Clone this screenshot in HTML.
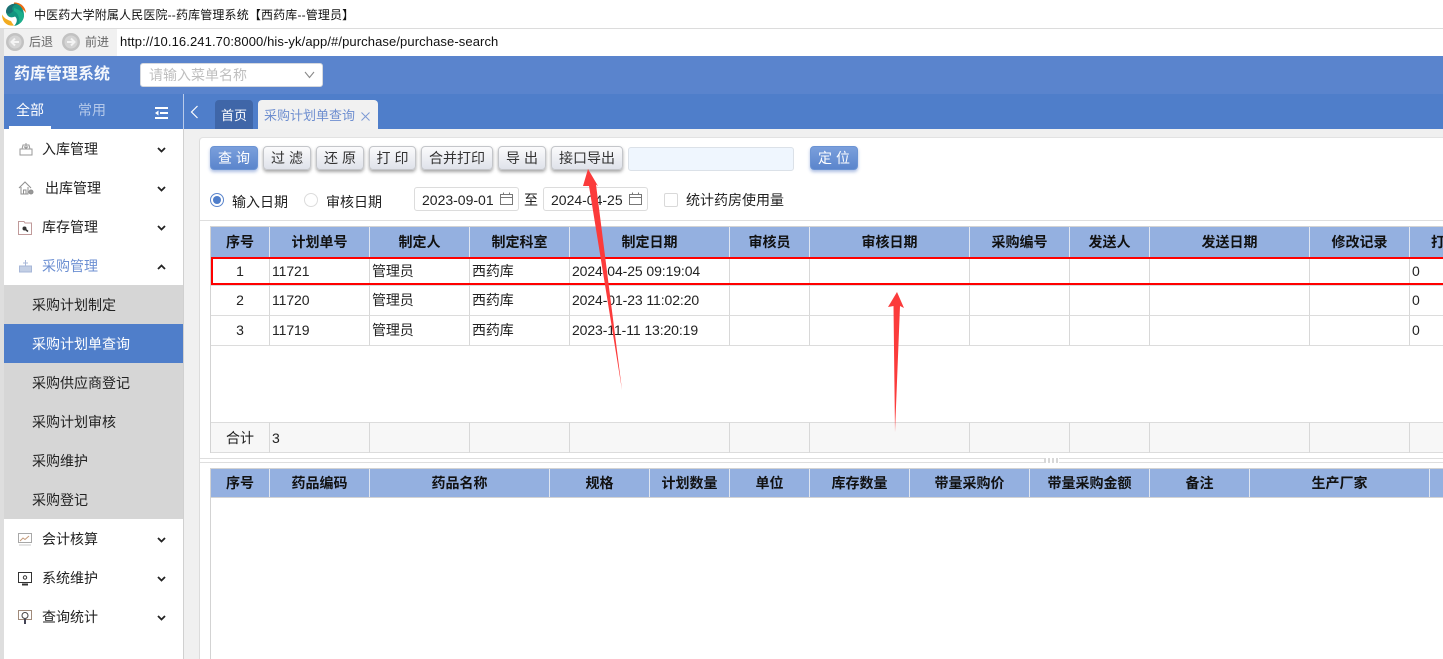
<!DOCTYPE html>
<html lang="zh"><head><meta charset="utf-8"><title>药库管理系统</title>
<style>
html,body{margin:0;padding:0;width:1443px;height:659px;overflow:hidden;background:#fff}
body{position:relative;font-family:"Liberation Sans","Noto Sans CJK SC",sans-serif;font-size:14px;color:#222}
.a{position:absolute;white-space:nowrap}
.t{position:absolute;white-space:nowrap;line-height:20px}
.btn{position:absolute;top:146px;height:24px;box-sizing:border-box;border:1px solid #c4c6ca;border-radius:4px;background:linear-gradient(#fbfbfc,#dfe2ea);box-shadow:0 2px 3px rgba(0,0,0,.35);text-align:center;line-height:22px;font-size:14px;color:#333}
.btn.p{background:linear-gradient(#7a9fdc,#5b85cc);border-color:#6b93d3;color:#fff;box-shadow:0 2px 3px rgba(70,110,190,.45)}
.w{letter-spacing:4px;text-indent:4px}
.mi{position:absolute;left:42px;font-size:14px;line-height:20px;color:#222;white-space:nowrap}
.si{position:absolute;left:4px;width:179px;height:39px;background:#d6d6d6;line-height:41px;padding-left:28px;box-sizing:border-box;font-size:14px;color:#222}
.hc,.c,.f{position:absolute;box-sizing:border-box;border-right:1px solid #d8d8d8;text-align:center;overflow:hidden;white-space:nowrap}
.hc{background:#94b0e0;font-weight:bold;color:#111;font-size:14px;line-height:30px;border-right:1px solid #dfe6f2}
.c{border-bottom:1px solid #dcdcdc;line-height:29px;font-size:14px;letter-spacing:-.1px;text-align:left;padding-left:2px;color:#222}
.f{background:#f7f7f7;line-height:30px;font-size:14px;text-align:left;padding-left:2px;border-top:1px solid #dcdcdc;border-bottom:1px solid #dcdcdc}
svg{position:absolute;overflow:visible}
</style></head><body>

<!-- title bar -->
<svg style="left:2px;top:2px" width="24" height="24" viewBox="0 0 24 24">
<path d="M12 0.500C18 0 23.500 4.500 24 11C21 7 17 4 12 3.500Z" fill="#ee6a12"/>
<path d="M0 12.500C2 16 5 18 9 19C10 21 11 22 12 23.500C5 24.500 0 20 0 12.500Z" fill="#f2ab1f"/>
<path d="M4 10C4 4 10 1 15 2C19 3.500 22 8 22 13C22 18 18 23 12 24C15 21 16 17 13 14.500C9 16.500 5 15 4 10Z" fill="#12947f"/>
<path d="M4 10C4 4 10 1 15 2C11 3 9 6 11 9C9 12 5 13 4 10Z" fill="#1a6f72"/>
<path d="M12 6C16 7 21 10 22 13C22 17 20 20 17 22C18 16 16 11 12 9Z" fill="#1bae8a"/>
</svg>
<div class="t" style="left:34px;top:5px;font-size:12px;color:#111;letter-spacing:.15px">中医药大学附属人民医院--药库管理系统【西药库--管理员】</div>
<div class="a" style="left:0;top:28px;width:1443px;height:1px;background:#dcdcdc"></div>

<!-- address bar -->
<div class="a" style="left:0;top:29px;width:117px;height:27px;background:#f1f1f1"></div>
<div class="a" style="left:0;top:29px;width:4px;height:630px;background:#dedede"></div>
<svg style="left:6px;top:33px" width="18" height="18" viewBox="0 0 18 18"><circle cx="9" cy="9" r="9" fill="#c2c2c2"/><circle cx="9" cy="9" r="6.5" fill="#d4d4d4"/><path d="M13 9H6M9 5.500L5.500 9L9 12.500" stroke="#f4f4f4" stroke-width="2" fill="none"/></svg>
<div class="t" style="left:29px;top:32px;font-size:12px;color:#666">后退</div>
<svg style="left:62px;top:33px" width="18" height="18" viewBox="0 0 18 18"><circle cx="9" cy="9" r="9" fill="#c2c2c2"/><circle cx="9" cy="9" r="6.5" fill="#d4d4d4"/><path d="M5 9H12M9 5.500L12.500 9L9 12.500" stroke="#f4f4f4" stroke-width="2" fill="none"/></svg>
<div class="t" style="left:85px;top:32px;font-size:12px;color:#666">前进</div>
<div class="t" style="left:120px;top:32px;font-size:13px;color:#111;letter-spacing:.1px">http://10.16.241.70:8000/his-yk/app/#/purchase/purchase-search</div>

<!-- header -->
<div class="a" style="left:4px;top:56px;width:1439px;height:38px;background:#5a84cd"></div>
<div class="t" style="left:14px;top:65px;font-size:16px;font-weight:bold;color:#f4f7fc">药库管理系统</div>
<div class="a" style="left:140px;top:63px;width:183px;height:24px;box-sizing:border-box;background:#fff;border:1px solid #d5d8de;border-radius:3px"></div>
<div class="t" style="left:149px;top:65px;font-size:14px;color:#bfbfbf">请输入菜单名称</div>
<svg style="left:304px;top:71px" width="11" height="8" viewBox="0 0 11 8"><path d="M1 1L5.500 6.500L10 1" stroke="#8a8a8a" stroke-width="1.100" fill="none"/></svg>

<!-- nav bar -->
<div class="a" style="left:4px;top:94px;width:1439px;height:35px;background:#4f7eca"></div>
<div class="a" style="left:183px;top:94px;width:1px;height:565px;background:#d0d0d0"></div>
<div class="a" style="left:183px;top:94px;width:1px;height:35px;background:#b9cbea"></div>
<div class="t" style="left:16px;top:100px;font-size:14px;color:#fff">全部</div>
<div class="a" style="left:9px;top:126px;width:42px;height:3px;background:#fff"></div>
<div class="t" style="left:78px;top:100px;font-size:14px;color:#b5c9ea">常用</div>
<svg style="left:155px;top:107px" width="13" height="12" viewBox="0 0 13 12"><path d="M0 1H13M5 6H13M0 11H13" stroke="#fff" stroke-width="2"/><path d="M3.500 3.500L0 6L3.500 8.500Z" fill="#fff"/></svg>
<svg style="left:190px;top:105px" width="9" height="14" viewBox="0 0 9 14"><path d="M7.500 1L1.500 7L7.500 13" stroke="#fff" stroke-width="1.200" fill="none"/></svg>
<div class="a" style="left:215px;top:100px;width:38px;height:31px;background:#3f66a8;border-radius:4px 4px 0 0"></div>
<div class="t" style="left:221px;top:106px;font-size:13px;color:#fff">首页</div>
<div class="a" style="left:258px;top:100px;width:120px;height:31px;background:#f1f1f1;border-radius:4px 4px 0 0"></div>
<div class="t" style="left:264px;top:106px;font-size:13px;color:#6f8fd0">采购计划单查询</div>
<svg style="left:361px;top:112px" width="9" height="9" viewBox="0 0 9 9"><path d="M0.500 0.500L8.500 8.500M8.500 0.500L0.500 8.500" stroke="#7c99d4" stroke-width="1"/></svg>

<!-- main bg -->
<div class="a" style="left:184px;top:129px;width:1259px;height:530px;background:#f0f0f0"></div>
<div class="a" style="left:199px;top:137px;width:1244px;height:522px;background:#fff;border-left:1px solid #dcdcdc;border-top:1px solid #e2e2e2;box-sizing:border-box;border-radius:4px 0 0 0"></div>

<!-- sidebar -->
<div class="a" style="left:4px;top:129px;width:179px;height:530px;background:#fff"></div>
<div class="si" style="top:285px">采购计划制定</div>
<div class="si" style="top:324px;background:#4f7eca;color:#fff">采购计划单查询</div>
<div class="si" style="top:363px">采购供应商登记</div>
<div class="si" style="top:402px">采购计划审核</div>
<div class="si" style="top:441px">采购维护</div>
<div class="si" style="top:480px">采购登记</div>

<div class="mi" style="top:139px">入库管理</div>
<div class="mi" style="top:178px;left:45px">出库管理</div>
<div class="mi" style="top:217px">库存管理</div>
<div class="mi" style="top:256px;color:#6c8fd2">采购管理</div>
<div class="mi" style="top:529px">会计核算</div>
<div class="mi" style="top:568px">系统维护</div>
<div class="mi" style="top:607px">查询统计</div>

<!-- sidebar icons -->
<svg style="left:19px;top:142px" width="14" height="14" viewBox="0 0 14 14" fill="none" stroke="#9a9a9a"><path d="M1 7H13V13H1ZM3 7L4 3H10L11 7M7 1V6M5 4.500L7 6.500L9 4.500"/></svg>
<svg style="left:18px;top:181px" width="16" height="14" viewBox="0 0 16 14" fill="none" stroke="#8f8f8f"><path d="M1 7L7 1L13 7M3 6V13H10V6M5.500 13V9H8V13"/><circle cx="13" cy="11" r="2" fill="#999"/></svg>
<svg style="left:18px;top:221px" width="14" height="14" viewBox="0 0 14 14" fill="none" stroke="#c09a9a"><path d="M0.500 0.500H6L7 2H13.500V13.500H0.500Z"/><circle cx="6.500" cy="7.500" r="2" fill="#333" stroke="none"/><path d="M7 8L10 10.500" stroke="#333" stroke-width="1.500"/></svg>
<svg style="left:19px;top:259px" width="13" height="14" viewBox="0 0 13 14" fill="none" stroke="#a7b7d8"><path d="M0.500 7H12.500V13H0.500Z" fill="#c3cfe5"/><path d="M6.500 1V7M4 4H9"/></svg>
<svg style="left:18px;top:533px" width="14" height="13" viewBox="0 0 14 13" fill="none" stroke="#a8a8a8"><rect x="0.500" y="0.500" width="13" height="9"/><path d="M2 8L5 5L7 6.500L11 3" stroke="#c49a7a"/><path d="M1 12H13" stroke="#c8c8c8"/></svg>
<svg style="left:18px;top:572px" width="14" height="14" viewBox="0 0 14 14" fill="none" stroke="#333"><rect x="0.500" y="0.500" width="13" height="10"/><circle cx="7" cy="5.500" r="1.700"/><path d="M4 12.500H10" stroke-width="2"/></svg>
<svg style="left:18px;top:610px" width="14" height="15" viewBox="0 0 14 15" fill="none" stroke="#666"><rect x="0.500" y="0.500" width="13" height="9" stroke="#a08a7a"/><circle cx="7" cy="5.500" r="3" stroke="#444"/><path d="M7 9V14" stroke="#445" stroke-width="2"/></svg>

<!-- chevrons -->
<svg style="left:157px;top:147px" width="9" height="6" viewBox="0 0 9 6"><path d="M1 1L4.500 4.500L8 1" stroke="#222" stroke-width="1.800" fill="none"/></svg>
<svg style="left:157px;top:186px" width="9" height="6" viewBox="0 0 9 6"><path d="M1 1L4.500 4.500L8 1" stroke="#222" stroke-width="1.800" fill="none"/></svg>
<svg style="left:157px;top:225px" width="9" height="6" viewBox="0 0 9 6"><path d="M1 1L4.500 4.500L8 1" stroke="#222" stroke-width="1.800" fill="none"/></svg>
<svg style="left:157px;top:264px" width="9" height="6" viewBox="0 0 9 6"><path d="M1 5L4.500 1.500L8 5" stroke="#222" stroke-width="1.800" fill="none"/></svg>
<svg style="left:157px;top:537px" width="9" height="6" viewBox="0 0 9 6"><path d="M1 1L4.500 4.500L8 1" stroke="#222" stroke-width="1.800" fill="none"/></svg>
<svg style="left:157px;top:576px" width="9" height="6" viewBox="0 0 9 6"><path d="M1 1L4.500 4.500L8 1" stroke="#222" stroke-width="1.800" fill="none"/></svg>
<svg style="left:157px;top:615px" width="9" height="6" viewBox="0 0 9 6"><path d="M1 1L4.500 4.500L8 1" stroke="#222" stroke-width="1.800" fill="none"/></svg>

<!-- toolbar -->
<div class="btn p w" style="left:210px;width:48px">查询</div>
<div class="btn w" style="left:263px;width:48px">过滤</div>
<div class="btn w" style="left:316px;width:48px">还原</div>
<div class="btn w" style="left:369px;width:47px">打印</div>
<div class="btn" style="left:421px;width:72px">合并打印</div>
<div class="btn w" style="left:498px;width:48px">导出</div>
<div class="btn" style="left:551px;width:72px">接口导出</div>
<div class="a" style="left:628px;top:147px;width:166px;height:24px;box-sizing:border-box;background:#eff6fe;border:1px solid #dbe1e8;border-radius:3px"></div>
<div class="btn p w" style="left:810px;width:48px">定位</div>

<!-- filter row -->
<svg style="left:210px;top:193px" width="14" height="14" viewBox="0 0 14 14"><circle cx="7" cy="7" r="6.500" fill="#fff" stroke="#5b85cc"/><circle cx="7" cy="7" r="4" fill="#4f7eca"/></svg>
<div class="t" style="left:232px;top:192px">输入日期</div>
<svg style="left:304px;top:193px" width="14" height="14" viewBox="0 0 14 14"><circle cx="7" cy="7" r="6.500" fill="#fff" stroke="#dcdcdc"/></svg>
<div class="t" style="left:326px;top:192px">审核日期</div>
<div class="a" style="left:414px;top:187px;width:105px;height:24px;box-sizing:border-box;border:1px solid #dcdcdc;border-radius:3px;background:#fff"></div>
<div class="t" style="left:422px;top:190px">2023-09-01</div>
<svg style="left:500px;top:192px" width="13" height="13" viewBox="0 0 13 13" fill="none" stroke="#777"><path d="M0.500 2.500H12.500V12.500H0.500ZM0.500 5.500H12.500M3.500 0.500V3M9.500 0.500V3"/></svg>
<div class="t" style="left:524px;top:190px">至</div>
<div class="a" style="left:543px;top:187px;width:105px;height:24px;box-sizing:border-box;border:1px solid #dcdcdc;border-radius:3px;background:#fff"></div>
<div class="t" style="left:551px;top:190px">2024-04-25</div>
<svg style="left:629px;top:192px" width="13" height="13" viewBox="0 0 13 13" fill="none" stroke="#777"><path d="M0.500 2.500H12.500V12.500H0.500ZM0.500 5.500H12.500M3.500 0.500V3M9.500 0.500V3"/></svg>
<div class="a" style="left:664px;top:193px;width:14px;height:14px;box-sizing:border-box;border:1px solid #d9d9d9;border-radius:2px"></div>
<div class="t" style="left:686px;top:190px">统计药房使用量</div>
<div class="a" style="left:200px;top:220px;width:1243px;height:1px;background:#dedede"></div>

<!-- table 1 -->
<div class="a" style="left:210px;top:226px;width:1233px;height:227px;box-sizing:border-box;border-left:1px solid #d3d3d3;border-top:1px solid #d3d3d3"></div>
<div class="hc" style="left:211px;top:227px;width:59px;height:30px">序号</div>
<div class="hc" style="left:270px;top:227px;width:100px;height:30px">计划单号</div>
<div class="hc" style="left:370px;top:227px;width:100px;height:30px">制定人</div>
<div class="hc" style="left:470px;top:227px;width:100px;height:30px">制定科室</div>
<div class="hc" style="left:570px;top:227px;width:160px;height:30px">制定日期</div>
<div class="hc" style="left:730px;top:227px;width:80px;height:30px">审核员</div>
<div class="hc" style="left:810px;top:227px;width:160px;height:30px">审核日期</div>
<div class="hc" style="left:970px;top:227px;width:100px;height:30px">采购编号</div>
<div class="hc" style="left:1070px;top:227px;width:80px;height:30px">发送人</div>
<div class="hc" style="left:1150px;top:227px;width:160px;height:30px">发送日期</div>
<div class="hc" style="left:1310px;top:227px;width:100px;height:30px">修改记录</div>
<div class="hc" style="left:1410px;top:227px;width:33px;height:30px;border-right:0;text-align:left;padding-left:21px">打印</div>

<!-- row 1 -->
<div class="c" style="left:211px;top:257px;width:59px;height:29px;text-align:center;padding:0">1</div>
<div class="c" style="left:270px;top:257px;width:100px;height:29px">11721</div>
<div class="c" style="left:370px;top:257px;width:100px;height:29px">管理员</div>
<div class="c" style="left:470px;top:257px;width:100px;height:29px">西药库</div>
<div class="c" style="left:570px;top:257px;width:160px;height:29px">2024-04-25 09:19:04</div>
<div class="c" style="left:730px;top:257px;width:80px;height:29px"></div>
<div class="c" style="left:810px;top:257px;width:160px;height:29px"></div>
<div class="c" style="left:970px;top:257px;width:100px;height:29px"></div>
<div class="c" style="left:1070px;top:257px;width:80px;height:29px"></div>
<div class="c" style="left:1150px;top:257px;width:160px;height:29px"></div>
<div class="c" style="left:1310px;top:257px;width:100px;height:29px"></div>
<div class="c" style="left:1410px;top:257px;width:33px;height:29px;border-right:0">0</div>
<!-- row 2 -->
<div class="c" style="left:211px;top:286px;width:59px;height:30px;text-align:center;padding:0">2</div>
<div class="c" style="left:270px;top:286px;width:100px;height:30px">11720</div>
<div class="c" style="left:370px;top:286px;width:100px;height:30px">管理员</div>
<div class="c" style="left:470px;top:286px;width:100px;height:30px">西药库</div>
<div class="c" style="left:570px;top:286px;width:160px;height:30px">2024-01-23 11:02:20</div>
<div class="c" style="left:730px;top:286px;width:80px;height:30px"></div>
<div class="c" style="left:810px;top:286px;width:160px;height:30px"></div>
<div class="c" style="left:970px;top:286px;width:100px;height:30px"></div>
<div class="c" style="left:1070px;top:286px;width:80px;height:30px"></div>
<div class="c" style="left:1150px;top:286px;width:160px;height:30px"></div>
<div class="c" style="left:1310px;top:286px;width:100px;height:30px"></div>
<div class="c" style="left:1410px;top:286px;width:33px;height:30px;border-right:0">0</div>
<!-- row 3 -->
<div class="c" style="left:211px;top:316px;width:59px;height:30px;text-align:center;padding:0">3</div>
<div class="c" style="left:270px;top:316px;width:100px;height:30px">11719</div>
<div class="c" style="left:370px;top:316px;width:100px;height:30px">管理员</div>
<div class="c" style="left:470px;top:316px;width:100px;height:30px">西药库</div>
<div class="c" style="left:570px;top:316px;width:160px;height:30px">2023-11-11 13:20:19</div>
<div class="c" style="left:730px;top:316px;width:80px;height:30px"></div>
<div class="c" style="left:810px;top:316px;width:160px;height:30px"></div>
<div class="c" style="left:970px;top:316px;width:100px;height:30px"></div>
<div class="c" style="left:1070px;top:316px;width:80px;height:30px"></div>
<div class="c" style="left:1150px;top:316px;width:160px;height:30px"></div>
<div class="c" style="left:1310px;top:316px;width:100px;height:30px"></div>
<div class="c" style="left:1410px;top:316px;width:33px;height:30px;border-right:0">0</div>
<!-- footer -->
<div class="f" style="left:211px;top:422px;width:59px;height:31px;text-align:center;padding:0">合计</div>
<div class="f" style="left:270px;top:422px;width:100px;height:31px">3</div>
<div class="f" style="left:370px;top:422px;width:100px;height:31px"></div>
<div class="f" style="left:470px;top:422px;width:100px;height:31px"></div>
<div class="f" style="left:570px;top:422px;width:160px;height:31px"></div>
<div class="f" style="left:730px;top:422px;width:80px;height:31px"></div>
<div class="f" style="left:810px;top:422px;width:160px;height:31px"></div>
<div class="f" style="left:970px;top:422px;width:100px;height:31px"></div>
<div class="f" style="left:1070px;top:422px;width:80px;height:31px"></div>
<div class="f" style="left:1150px;top:422px;width:160px;height:31px"></div>
<div class="f" style="left:1310px;top:422px;width:100px;height:31px"></div>
<div class="f" style="left:1410px;top:422px;width:33px;height:31px;border-right:0"></div>

<!-- red highlight -->
<div class="a" style="left:211px;top:257px;width:1232px;height:28px;box-sizing:border-box;border:2px solid #f00;border-right:0"></div>

<!-- splitter -->
<div class="a" style="left:200px;top:458px;width:1243px;height:5px;box-sizing:border-box;border-top:1px solid #dedede;border-bottom:1px solid #dedede;background:#fff"></div>
<div class="a" style="left:1044px;top:458px;width:15px;height:5px;background:repeating-linear-gradient(90deg,#d8d8d8 0 2px,#fff 2px 4px)"></div>

<!-- table 2 -->
<div class="a" style="left:210px;top:468px;width:1px;height:191px;background:#d3d3d3"></div>
<div class="a" style="left:210px;top:468px;width:1233px;height:1px;background:#d3d3d3"></div>
<div class="hc" style="left:211px;top:469px;width:59px;height:28px;line-height:28px">序号</div>
<div class="hc" style="left:270px;top:469px;width:100px;height:28px;line-height:28px">药品编码</div>
<div class="hc" style="left:370px;top:469px;width:180px;height:28px;line-height:28px">药品名称</div>
<div class="hc" style="left:550px;top:469px;width:100px;height:28px;line-height:28px">规格</div>
<div class="hc" style="left:650px;top:469px;width:80px;height:28px;line-height:28px">计划数量</div>
<div class="hc" style="left:730px;top:469px;width:80px;height:28px;line-height:28px">单位</div>
<div class="hc" style="left:810px;top:469px;width:100px;height:28px;line-height:28px">库存数量</div>
<div class="hc" style="left:910px;top:469px;width:120px;height:28px;line-height:28px">带量采购价</div>
<div class="hc" style="left:1030px;top:469px;width:120px;height:28px;line-height:28px">带量采购金额</div>
<div class="hc" style="left:1150px;top:469px;width:100px;height:28px;line-height:28px">备注</div>
<div class="hc" style="left:1250px;top:469px;width:180px;height:28px;line-height:28px">生产厂家</div>
<div class="hc" style="left:1430px;top:469px;width:13px;height:28px;border-right:0"></div>
<div class="a" style="left:211px;top:497px;width:1232px;height:1px;background:#d3d3d3"></div>

<!-- red arrows -->
<svg style="left:0;top:0" width="1443" height="659" viewBox="0 0 1443 659">
<path d="M588 169L598 186L596 184.500L622 390L589 186L583 186Z" fill="#fb3b3b"/>
<path d="M897 292L904 308L900 306L895 432L893.500 306L888 307Z" fill="#fb3b3b"/>
</svg>
</body></html>
